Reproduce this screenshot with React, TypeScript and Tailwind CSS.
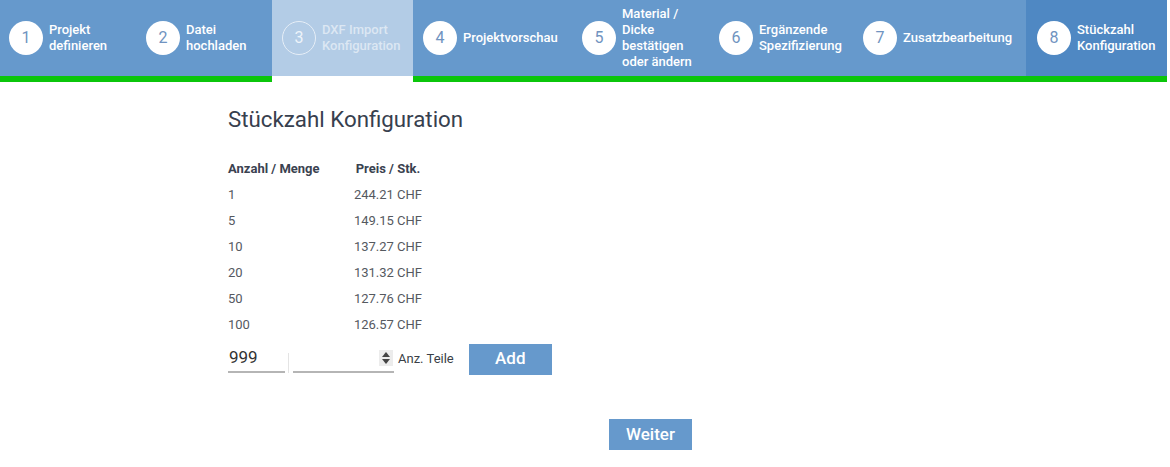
import React from "react";

const steps = [
  { n: 1, lines: ["Projekt", "definieren"], w: "w-[137px]", pl: "pl-[9px]", kind: "normal" },
  { n: 2, lines: ["Datei", "hochladen"], w: "w-[135px]", pl: "pl-[9px]", kind: "normal" },
  { n: 3, lines: ["DXF Import", "Konfiguration"], w: "w-[141px]", pl: "pl-[10px]", kind: "disabled" },
  { n: 4, lines: ["Projektvorschau"], w: "w-[159px]", pl: "pl-[10px]", kind: "normal" },
  { n: 5, lines: ["Material /", "Dicke", "bestätigen", "oder ändern"], w: "w-[137px]", pl: "pl-[10px]", kind: "normal" },
  { n: 6, lines: ["Ergänzende", "Spezifizierung"], w: "w-[144px]", pl: "pl-[10px]", kind: "normal" },
  { n: 7, lines: ["Zusatzbearbeitung"], w: "w-[173px]", pl: "pl-[10px]", kind: "normal" },
  { n: 8, lines: ["Stückzahl", "Konfiguration"], w: "w-[141px]", pl: "pl-[11px]", kind: "active" },
];

const rows = [
  ["1", "244.21 CHF"],
  ["5", "149.15 CHF"],
  ["10", "137.27 CHF"],
  ["20", "131.32 CHF"],
  ["50", "127.76 CHF"],
  ["100", "126.57 CHF"],
];

function Step({ s }: { s: (typeof steps)[number] }) {
  const bg =
    s.kind === "disabled" ? "bg-[#b3cce6] border-white" : s.kind === "active" ? "bg-[#4f88c3] border-[#0bc60b]" : "bg-[#6699cc] border-[#0bc60b]";
  return (
    <div className={`${s.w} ${s.pl} ${bg} h-[82px] border-b-[6px] flex items-center gap-[6px] shrink-0`}>
      {s.kind === "disabled" ? (
        <div className="w-[34px] h-[34px] rounded-full border-[1.5px] border-[#e6eef7] flex items-center justify-center text-[16px] text-[#eef4fa] shrink-0">
          {s.n}
        </div>
      ) : (
        <div className="w-[34px] h-[34px] rounded-full bg-white flex items-center justify-center text-[16px] text-[#7093c0] shrink-0">
          {s.n}
        </div>
      )}
      <div
        className={`text-[13px] leading-[16px] font-medium ${
          s.kind === "disabled" ? "text-[#dce7f3]" : "text-white"
        }`}
      >
        {s.lines.map((l) => (
          <div key={l}>{l}</div>
        ))}
      </div>
    </div>
  );
}

export default function App() {
  return (
    <div className="w-[1170px] h-[467px] bg-white font-['Roboto',sans-serif] overflow-hidden">
      <div className="flex">
        {steps.map((s) => (
          <Step key={s.n} s={s} />
        ))}
      </div>
      <div className="pl-[228px]">
        <h1 className="mt-[23px] text-[22.3px] leading-[28px] font-normal text-[#37404e]">Stückzahl Konfiguration</h1>
        <div className="mt-[23px] text-[13px]">
          <div className="flex h-[26px] items-center font-bold text-[#3a4250]">
            <div className="w-[110px]">Anzahl / Menge</div>
            <div className="w-[100px] text-center">Preis / Stk.</div>
          </div>
          {rows.map(([a, p]) => (
            <div key={a} className="flex h-[26px] items-center text-[#55595f]">
              <div className="w-[110px]">{a}</div>
              <div className="w-[100px] text-center">{p}</div>
            </div>
          ))}
        </div>
        <div className="flex items-center mt-[6px] h-[30px]">
          <div className="relative flex items-end h-[28px] w-[166px]">
            <div className="w-[57px] h-full border-b-2 border-[#b5b5b5] text-[17px] text-[#333] flex items-center pl-[1px]">999</div>
            <div className="w-[1px] h-[20px] bg-[#e4e4e4] ml-[3px] mr-[4px]"></div>
            <div className="flex-1 h-full border-b-2 border-[#b5b5b5] flex items-center justify-end pr-[1px]">
              <div className="w-[14px] h-[16px] bg-[#ececec] flex flex-col items-center justify-center gap-[2px]">
                <svg width="8" height="5" viewBox="0 0 8 5"><path d="M0 5 L4 0 L8 5 Z" fill="#444" /></svg>
                <svg width="8" height="5" viewBox="0 0 8 5"><path d="M0 0 L4 5 L8 0 Z" fill="#444" /></svg>
              </div>
            </div>
          </div>
          <div className="ml-[4px] text-[13px] text-[#3a3f47]">Anz. Teile</div>
          <button className="ml-[15px] w-[83px] h-[31px] bg-[#6699cc] text-white text-[17px] font-medium">Add</button>
        </div>
        <div className="mt-[45px] pl-[381px]">
          <button className="w-[83px] h-[31px] bg-[#6699cc] text-white text-[17px] font-medium">Weiter</button>
        </div>
      </div>
    </div>
  );
}
